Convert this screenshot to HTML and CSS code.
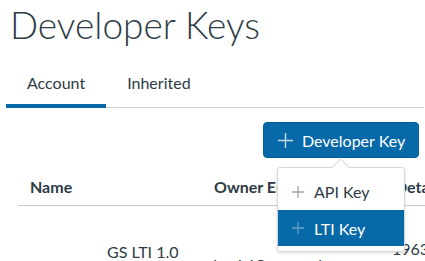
FILE: index.html
```html
<!DOCTYPE html>
<html>
<head>
<meta charset="utf-8">
<link rel="stylesheet" href="styles.css">
</head>
<body>
<div class="page">
  <h1 class="title">Developer Keys</h1>
  <div class="tabs">
    <div class="tab active">Account</div>
    <div class="tab">Inherited</div>
  </div>
  <div class="actions">
    <button class="btn">
      <svg class="plus" width="15" height="15" viewBox="0 0 15 15"><path d="M7.5 0V15M0 7.5H15" stroke="currentColor" stroke-width="1.4"/></svg>
      <span>Developer Key</span>
    </button>
    <div class="popover">
      <div class="arrow"></div>
      <div class="item">
        <svg class="mplus" width="12" height="12" viewBox="0 0 12 12"><path d="M6 0V12M0 6H12" stroke="currentColor" stroke-width="1.3"/></svg>
        <span>API Key</span>
      </div>
      <div class="item selected">
        <svg class="mplus" width="12" height="12" viewBox="0 0 12 12"><path d="M6 0V12M0 6H12" stroke="currentColor" stroke-width="1.3"/></svg>
        <span>LTI Key</span>
      </div>
    </div>
  </div>
  <div class="table">
    <div class="thead">
      <div class="th">Name</div>
      <div class="th">Owner Email</div>
      <div class="th">Details</div>
    </div>
    <div class="trow">
      <div class="td name">GS LTI 1.0</div>
      <div class="td email">dmalai@someedu.com</div>
      <div class="td details">1963</div>
    </div>
  </div>
</div>
</body>
</html>
```
FILE: styles.css
```css
html, body {
  margin: 0;
  padding: 0;
  background: #fff;
  overflow: hidden;
}
body {
  font-family: Lato, "Open Sans", sans-serif;
  color: #2D3B45;
  width: 425px;
  height: 261px;
}
.page {
  position: relative;
  height: 261px;
  overflow: hidden;
}
.title {
  margin: 0;
  padding: 3px 0 0 10px;
  height: 45px;
  font-size: 37px;
  font-weight: 300;
  line-height: 1.2;
  white-space: nowrap;
}
.tabs {
  display: flex;
  margin: 0 1px 0 6px;
  border-bottom: 1px solid #C7CDD1;
}
.tab {
  font-size: 16px;
  line-height: 19px;
  padding: 25px 21px 12px;
  margin-bottom: -1px;
  border-bottom: 4px solid transparent;
}
.tab.active {
  border-bottom-color: #0769A8;
}
.actions {
  position: relative;
  display: flex;
  justify-content: flex-end;
  padding: 14px 6px 0 0;
}
.btn {
  display: flex;
  align-items: center;
  gap: 9px;
  height: 36px;
  width: 156px;
  padding: 0 0 0 14px;
  border: 1px solid #065E96;
  border-radius: 4px;
  background: #0769A8;
  color: #fff;
  font-family: Lato, "Open Sans", sans-serif;
  font-size: 16px;
}
.btn .plus {
  color: #C9DCEA;
  flex: none;
}
.popover {
  position: absolute;
  left: 277px;
  top: 59px;
  width: 128px;
  padding: 5px 0 5px;
  background: #fff;
  border: 1px solid #D5DADD;
  border-radius: 3px;
  box-shadow: 0 1px 3px rgba(0,0,0,0.15);
  box-sizing: border-box;
  z-index: 5;
}
.arrow {
  position: absolute;
  left: 56px;
  top: -7px;
  width: 12px;
  height: 12px;
  background: #fff;
  border-left: 1px solid #D5DADD;
  border-top: 1px solid #D5DADD;
  transform: rotate(45deg);
}
.item {
  position: relative;
  display: flex;
  align-items: center;
  gap: 10px;
  height: 37px;
  padding-left: 14px;
  font-size: 16px;
}
.item .mplus {
  color: #A0A8AE;
}
.item.selected {
  background: #0769A8;
  color: #fff;
  height: 36px;
}
.item.selected .mplus {
  color: #6A9FC8;
}
.table {
  margin-left: 18px;
}
.thead {
  display: grid;
  grid-template-columns: 184px 181px 1fr;
  border-bottom: 1px solid #C7CDD1;
  height: 48px;
  box-sizing: border-box;
}
.th {
  font-weight: 700;
  font-size: 16px;
  line-height: 19px;
  padding: 19px 0 0 12px;
  white-space: nowrap;
}
.trow {
  display: grid;
  grid-template-columns: 184px 181px 1fr;
  font-size: 16px;
  line-height: 19px;
}
.td {
  white-space: nowrap;
}
.name {
  padding: 36px 0 0 89px;
}
.email {
  padding: 49px 0 0 6px;
}
.details {
  padding: 33px 0 0 9px;
}
```
